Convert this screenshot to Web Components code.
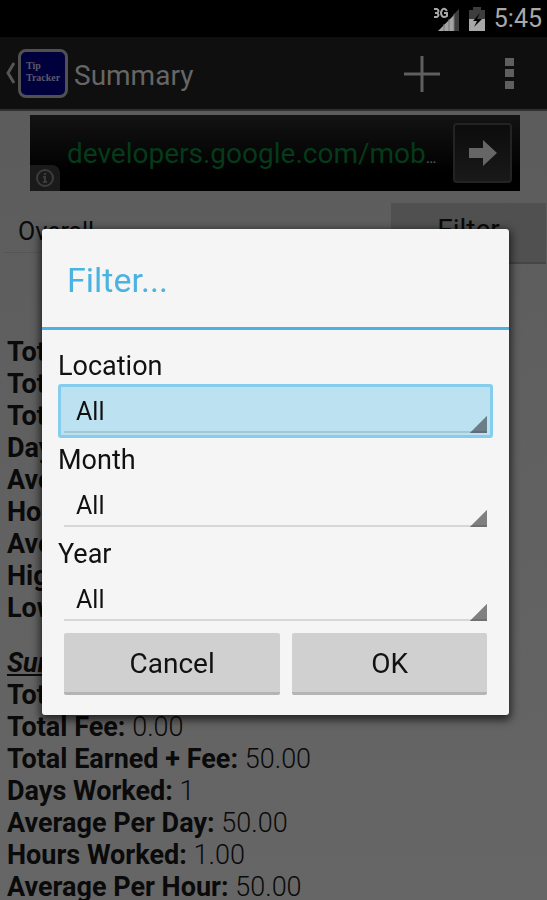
<!DOCTYPE html>
<html lang="en">
<head>
<meta charset="utf-8">
<meta name="viewport" content="width=device-width, initial-scale=1">
<title>Tip Tracker - Summary</title>
<style>
    body {
        margin: 0;
        font-family: Roboto, "Liberation Sans", sans-serif;
        color: #0a0a0a;
        background: #5e5e5e;
    }
</style>
</head>
<body>
<tip-screen>
    <status-bar slot="top" time="5:45"></status-bar>
    <action-bar slot="top" title-text="Summary"></action-bar>
    <ad-banner>developers.google.com/mob</ad-banner>
    <summary-toolbar></summary-toolbar>
    <summary-section>
        <summary-row label="Tot"></summary-row>
        <summary-row label="Tot"></summary-row>
        <summary-row label="Tot"></summary-row>
        <summary-row label="Day"></summary-row>
        <summary-row label="Ave"></summary-row>
        <summary-row label="Hou"></summary-row>
        <summary-row label="Ave"></summary-row>
        <summary-row label="Hig"></summary-row>
        <summary-row label="Low"></summary-row>
    </summary-section>
    <summary-section heading="Sunday">
        <summary-row label="Total Earned:">50.00</summary-row>
        <summary-row label="Total Fee:">0.00</summary-row>
        <summary-row label="Total Earned + Fee:">50.00</summary-row>
        <summary-row label="Days Worked:">1</summary-row>
        <summary-row label="Average Per Day:">50.00</summary-row>
        <summary-row label="Hours Worked:">1.00</summary-row>
        <summary-row label="Average Per Hour:">50.00</summary-row>
    </summary-section>
    <filter-dialog slot="dialog" title-text="Filter...">
        <filter-field label="Location" active></filter-field>
        <filter-field label="Month"></filter-field>
        <filter-field label="Year"></filter-field>
        <holo-button slot="actions" style="flex: 10">Cancel</holo-button>
        <holo-button slot="actions" style="flex: 9">OK</holo-button>
    </filter-dialog>
</tip-screen>

<script>
class BaseElement extends HTMLElement {
    constructor() {
        super();
        this.attachShadow({ mode: "open" });
    }

    connectedCallback() {
        this.shadowRoot.innerHTML = this.render();
    }
}

class TipScreen extends BaseElement {
    render() {
        return `
          <style>
              :host {
                  display: flex;
                  flex-direction: column;
                  height: 100vh;
                  overflow: hidden;
              }
              main {
                  flex: 1;
                  min-height: 0;
                  overflow: hidden;
                  background: linear-gradient(#5c5c5c, #666666);
              }
          </style>
          <slot name="top"></slot>
          <main><slot></slot></main>
          <slot name="dialog"></slot>
        `;
    }
}

class StatusBar extends BaseElement {
    render() {
        return `
          <style>
              :host {
                  display: flex;
                  flex: none;
                  align-items: center;
                  justify-content: flex-end;
                  gap: 8px;
                  height: 37px;
                  padding-right: 5px;
                  background: #000;
                  color: #a8a8a8;
                  font-size: 25px;
              }
              svg { display: block; }
          </style>
          <svg width="28" height="26" viewBox="0 0 28 26" role="img" aria-label="3G signal">
              <path d="M6 25 L22 9 V25 Z" fill="#a4a4a4"/>
              <path d="M22 8 L27 3 V25 H22 Z" fill="#3d3d3d"/>
              <path d="M12 18 V25 M17 13 V25 M22 8 V25" stroke="#777" stroke-width="1"/>
              <g fill="none" stroke="#a8a8a8" stroke-width="2">
                  <path d="M2 3 H5 Q8 5 5 7 H3 M5 7 Q8 9 5 11 H2"/>
                  <path d="M15 5 Q12 1 10 4 Q8 7 10 10 Q12 12 15 10 V7 H12"/>
              </g>
          </svg>
          <svg width="18" height="26" viewBox="0 0 18 26" role="img" aria-label="Battery">
              <path d="M1 4 H5 V1 H13 V4 H17 V14 H1 Z" fill="#3d3d3d"/>
              <path d="M1 13 H17 V25 H1 Z" fill="#a8a8a8"/>
              <path d="M12 7 L5 15 H9 L6 21 L14 13 H9 Z" fill="#000"/>
          </svg>
          <time>${this.getAttribute("time")}</time>
        `;
    }
}

class ActionBar extends BaseElement {
    render() {
        return `
          <style>
              :host {
                  display: flex;
                  flex: none;
                  align-items: center;
                  height: 72px;
                  padding: 0 24px 0 4px;
                  background: #0f0f0f;
                  border-bottom: 2px solid #303030;
                  color: #666;
              }
              button {
                  display: flex;
                  align-items: center;
                  justify-content: center;
                  padding: 0;
                  border: 0;
                  background: none;
                  color: inherit;
              }
              svg { display: block; }
              .logo {
                  box-sizing: border-box;
                  width: 50px;
                  height: 49px;
                  padding: 8px 0 0 5px;
                  border: 3px solid #505050;
                  border-radius: 8px;
                  background: #00003c;
                  color: #5a5a6c;
                  font: bold 10px/12px "Liberation Serif", serif;
                  text-align: left;
              }
              h1 {
                  flex: 1;
                  margin: 0 0 0 6px;
                  padding-top: 5px;
                  font-size: 28px;
                  font-weight: 400;
              }
              .add { width: 72px; height: 72px; }
              .more { width: 28px; height: 72px; margin-left: 37px; }
          </style>
          <button aria-label="Back">
              <svg width="14" height="24" viewBox="0 0 14 24"><path d="M10 2 L4 12 L10 22" fill="none" stroke="#555" stroke-width="3"/></svg>
              <span class="logo">Tip<br>Tracker</span>
          </button>
          <h1>${this.getAttribute("title-text")}</h1>
          <button class="add" aria-label="Add">
              <svg width="38" height="38" viewBox="0 0 38 38"><path d="M19 2 V38 M1 20 H37" stroke="#5f5f5f" stroke-width="3"/></svg>
          </button>
          <button class="more" aria-label="More options">
              <svg width="9" height="32" viewBox="0 0 9 32"><path d="M0 1 H9 V9 H0 Z M0 12 H9 V20 H0 Z M0 24 H9 V32 H0 Z" fill="#5f5f5f"/></svg>
          </button>
        `;
    }
}

class AdBanner extends BaseElement {
    render() {
        return `
          <style>
              :host {
                  display: flex;
                  align-items: flex-end;
                  height: 76px;
                  margin: 4px 27px 0 30px;
                  background: linear-gradient(#131313, #000 75%);
              }
              .info {
                  display: flex;
                  align-items: center;
                  justify-content: center;
                  width: 30px;
                  height: 26px;
                  border-top-right-radius: 8px;
                  background: #1a1a1a;
              }
              a {
                  flex: 1;
                  align-self: center;
                  margin-left: 7px;
                  color: #053a1a;
                  font-size: 28px;
                  text-decoration: none;
                  white-space: nowrap;
              }
              .more {
                  color: #5a5a5a;
                  font-size: 16px;
              }
              button {
                  display: flex;
                  flex: none;
                  align-items: center;
                  justify-content: center;
                  align-self: center;
                  box-sizing: border-box;
                  width: 59px;
                  height: 60px;
                  margin-right: 8px;
                  padding: 0;
                  border: 2px solid #232323;
                  border-radius: 4px;
                  background: linear-gradient(#0c0c0c, #191919);
              }
          </style>
          <span class="info">
              <svg width="20" height="20" viewBox="0 0 20 20" fill="none" stroke="#3c3c3c" stroke-width="2">
                  <circle cx="10" cy="10" r="8"/>
                  <path d="M10 5 V7 M8 9 H10 V14 M8 14 H12"/>
              </svg>
          </span>
          <a href="#ad"><slot></slot><span class="more">…</span></a>
          <button aria-label="Open ad">
              <svg width="28" height="26" viewBox="0 0 28 26"><path d="M0 8 H14 V0 L28 13 L14 26 V18 H0 Z" fill="#666"/></svg>
          </button>
        `;
    }
}

class SummaryToolbar extends BaseElement {
    render() {
        return `
          <style>
              :host {
                  display: flex;
                  align-items: flex-start;
                  justify-content: space-between;
                  padding: 12px 1px 72px 4px;
              }
              select, button {
                  border: 0;
                  border-radius: 0;
                  color: inherit;
                  font-family: inherit;
              }
              select {
                  appearance: none;
                  width: 380px;
                  height: 50px;
                  padding: 8px 14px 0;
                  border-bottom: 1px solid #555;
                  background: none;
                  font-size: 25px;
              }
              button {
                  width: 155px;
                  height: 61px;
                  padding: 0 0 6px;
                  border-bottom: 2px solid #454545;
                  background: #505050;
                  font-size: 28px;
              }
          </style>
          <select aria-label="Summary type"><option>Overall</option></select>
          <button>Filter</button>
        `;
    }
}

class SummarySection extends BaseElement {
    render() {
        const heading = this.getAttribute("heading");
        return `
          <style>
              :host {
                  display: block;
                  padding: 0 7px 23px;
                  font-size: 27px;
                  line-height: 32px;
              }
              h2 {
                  margin: 0;
                  font-size: inherit;
                  font-style: italic;
                  text-decoration: underline;
              }
          </style>
          ${heading ? `<h2>${heading}</h2>` : ""}
          <slot></slot>
        `;
    }
}

class SummaryRow extends BaseElement {
    render() {
        return `
          <style>
              :host { display: block; white-space: nowrap; }
              span { font-weight: 300; }
          </style>
          <b>${this.getAttribute("label")}</b> <span><slot></slot></span>
        `;
    }
}

class FilterDialog extends BaseElement {
    render() {
        return `
          <style>
              /* covers the whole screen, the panel sits in the middle */
              :host {
                  position: fixed;
                  inset: 0;
                  display: flex;
                  align-items: center;
                  padding: 44px 38px 0 42px;
              }
              section {
                  flex: 1;
                  border-radius: 3px;
                  background: #f5f5f5;
                  box-shadow: 0 3px 8px 2px rgba(0, 0, 0, 0.65);
                  color: #111;
              }
              h2 {
                  margin: 0;
                  padding: 4px 25px 0;
                  border-bottom: 3px solid #4ab3e2;
                  color: #4ab3e2;
                  font-size: 34px;
                  font-weight: 400;
                  line-height: 94px;
              }
              .fields { padding: 18px 16px 0; }
              .actions {
                  display: flex;
                  gap: 12px;
                  padding: 3px 22px 20px;
              }
          </style>
          <section role="dialog" aria-labelledby="title">
              <h2 id="title">${this.getAttribute("title-text")}</h2>
              <div class="fields"><slot></slot></div>
              <div class="actions"><slot name="actions"></slot></div>
          </section>
        `;
    }
}

class FilterField extends BaseElement {
    render() {
        return `
          <style>
              :host { display: block; padding-bottom: 4px; }
              label {
                  display: block;
                  font-size: 27px;
                  line-height: 36px;
              }
              .box {
                  display: flex;
                  box-sizing: border-box;
                  height: 54px;
                  padding: 3px;
                  border: 3px solid transparent;
                  border-radius: 3px;
              }
              :host([active]) .box {
                  border-color: #84cdec;
                  background: #bce2f1;
              }
              select {
                  appearance: none;
                  flex: 1;
                  height: 43px;
                  padding: 2px 12px 0;
                  border: 0;
                  border-bottom: 2px solid rgba(0, 0, 0, 0.12);
                  border-radius: 0;
                  background: linear-gradient(135deg, transparent 50%, #808080 calc(50% + 1px)) right bottom / 18px 18px no-repeat border-box;
                  color: inherit;
                  font: 25px Roboto, sans-serif;
                  outline: none;
              }
              :host([active]) select {
                  background-image: linear-gradient(135deg, transparent 50%, #6b7d88 calc(50% + 1px));
              }
          </style>
          <label for="choice">${this.getAttribute("label")}</label>
          <div class="box">
              <select id="choice"><option>All</option></select>
          </div>
        `;
    }
}

class HoloButton extends BaseElement {
    render() {
        return `
          <style>
              :host { display: flex; }
              button {
                  flex: 1;
                  height: 62px;
                  padding: 2px 0 0;
                  border: 0;
                  border-bottom: 3px solid #b4b4b4;
                  border-radius: 2px;
                  background: #d0d0d0;
                  color: inherit;
                  font-family: inherit;
                  font-size: 28px;
              }
          </style>
          <button><slot></slot></button>
        `;
    }
}

customElements.define("tip-screen", TipScreen);
customElements.define("status-bar", StatusBar);
customElements.define("action-bar", ActionBar);
customElements.define("ad-banner", AdBanner);
customElements.define("summary-toolbar", SummaryToolbar);
customElements.define("summary-section", SummarySection);
customElements.define("summary-row", SummaryRow);
customElements.define("filter-dialog", FilterDialog);
customElements.define("filter-field", FilterField);
customElements.define("holo-button", HoloButton);
</script>
</body>
</html>
